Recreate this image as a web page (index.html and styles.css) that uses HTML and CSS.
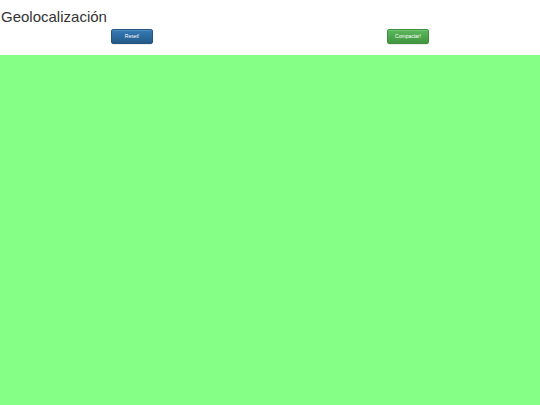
FILE: index.html
```html
<!DOCTYPE html>
<html lang="es">
<head>
<meta charset="utf-8">
<title>Geolocalización</title>
<link rel="stylesheet" href="styles.css">
</head>
<body>
<header class="header">
  <h1 class="title">Geolocalización</h1>
  <div class="actions">
    <button class="btn btn-primary" type="button">Reset!</button>
    <button class="btn btn-success" type="button">Compactar!</button>
  </div>
</header>
<main class="map"></main>
</body>
</html>
```

FILE: styles.css
```css
html, body {
  margin: 0;
  padding: 0;
  height: 100%;
}
body {
  font-family: "Liberation Sans", Arial, sans-serif;
  color: #333;
  background: #fff;
  display: flex;
  flex-direction: column;
}
.header {
  display: flex;
  flex-direction: column;
}
.title {
  margin: 0;
  padding: 8px 0 0 1px;
  font-size: 15px;
  font-weight: normal;
  line-height: 18px;
  color: #333;
}
.actions {
  display: flex;
  gap: 234px;
  padding: 3px 0 0 111px;
  height: 29px;
  box-sizing: border-box;
}
.btn {
  width: 42px;
  height: 15px;
  padding: 0;
  border: 1px solid transparent;
  border-radius: 2px;
  font-family: "Liberation Sans", Arial, sans-serif;
  font-size: 5px;
  line-height: 13px;
  color: #fff;
  text-align: center;
  box-sizing: border-box;
  box-shadow: inset 0 1px 0 rgba(255,255,255,.15), 0 1px 1px rgba(0,0,0,.075);
}
.btn-primary {
  background: linear-gradient(to bottom, #337ab7 0, #265a88 100%);
  border-color: #245580;
}
.btn-success {
  background: linear-gradient(to bottom, #5cb85c 0, #419641 100%);
  border-color: #3e8f3e;
}
.map {
  flex: 1;
  background: #85ff85;
}
```
